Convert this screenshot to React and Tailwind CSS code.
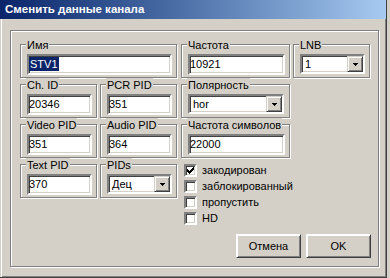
import React from "react";

const sunken =
  "border-2 border-t-[#808080] border-l-[#808080] border-b-white border-r-white shadow-[inset_1px_1px_0_#404040,inset_-1px_-1px_0_#d4d0c8] bg-white";
const raised =
  "border border-t-[#d4d0c8] border-l-[#d4d0c8] border-b-[#404040] border-r-[#404040] shadow-[inset_1px_1px_0_#fff,inset_-1px_-1px_0_#808080] bg-[#d4d0c8]";

function Group({ label, w, children }) {
  return (
    <div
      className={`relative h-[34px] shrink-0 border border-[#808080] shadow-[inset_1px_1px_0_#fff,1px_1px_0_#fff] ${w}`}
    >
      <span className="absolute left-[5px] top-[-7px] bg-[#d4d0c8] px-[1px] leading-[14px] whitespace-nowrap">
        {label}
      </span>
      <div className="pl-[6px] pt-[9px]">{children}</div>
    </div>
  );
}

function Field({ value, w, selected }) {
  return (
    <div className={`${sunken} ${w} h-[21px] leading-[17px]`}>
      {selected ? (
        <span className="inline-block bg-[#0a246a] px-[1px] leading-[14px] text-white">{value}</span>
      ) : (
        value
      )}
    </div>
  );
}

function Arrow() {
  return (
    <svg width="5" height="3" viewBox="0 0 5 3" className="block">
      <path d="M0 0h5v1h-1v1h-1v1h-1v-1h-1v-1h-1z" fill="#000" />
    </svg>
  );
}

function Combo({ value, w }) {
  return (
    <div className={`${sunken} ${w} flex h-[20px]`}>
      <div className="flex-1 pl-[3px] leading-[16px]">{value}</div>
      <div className={`${raised} flex h-[16px] w-[16px] items-center justify-center`}>
        <Arrow />
      </div>
    </div>
  );
}

function Check({ label, checked }) {
  return (
    <div className="flex h-[16px] w-[112px] items-start whitespace-nowrap">
      <div className={`${sunken} h-[13px] w-[13px] shrink-0`}>
        {checked && (
          <svg width="9" height="9" viewBox="0 0 9 9" className="block">
            <path
              d="M7 1h1v1h-1zM6 2h2v1h-2zM1 3h1v1h-1zM5 3h3v1h-3zM1 4h2v1h-2zM4 4h3v1h-3zM1 5h5v1h-5zM2 6h3v1h-3zM3 7h1v1h-1z"
              fill="#000"
            />
          </svg>
        )}
      </div>
      <span className="ml-[5px] leading-[13px]">{label}</span>
    </div>
  );
}

function Button({ children }) {
  return (
    <div
      className={`${raised} flex h-[24px] w-[65px] items-center justify-center border-t-white border-l-white shadow-[inset_-1px_-1px_0_#808080]`}
    >
      {children}
    </div>
  );
}

export default function App() {
  return (
    <div className="h-[278px] w-[390px] overflow-hidden bg-[#d4d0c8] text-[11px] text-black font-['Liberation_Sans',Arial,sans-serif]">
      <div className="h-[278px] w-[387px] border-b border-r border-b-[#404040] border-r-[#404040] shadow-[inset_1px_0_0_#d4d0c8,inset_2px_0_0_#fff,inset_-1px_-1px_0_#808080]">
        {/* title bar */}
        <div className="h-[19px] bg-gradient-to-r from-[#0a246a] to-[#a6caf0] pl-[5px] pt-[2px] text-[11.5px] font-bold leading-[15px] text-white">
          Сменить данные канала
        </div>

        {/* frame */}
        <div className="ml-[10px] mt-[11px] h-[237px] w-[369px] border border-[#808080] pl-[9px] pr-[7px] pt-[13px] shadow-[inset_1px_1px_0_#fff,1px_1px_0_#fff]">
          <div className="flex">
            <Group label="Имя" w="w-[157px]">
              <Field value="STV1" w="w-[145px]" selected />
            </Group>
            <div className="ml-[4px]">
              <Group label="Частота" w="w-[109px]">
                <Field value="10921" w="w-[97px]" />
              </Group>
            </div>
            <div className="ml-[3px]">
              <Group label="LNB" w="w-[77px]">
                <Combo value="1" w="w-[65px]" />
              </Group>
            </div>
          </div>

          <div className="mt-[6px] flex">
            <Group label="Ch. ID" w="w-[77px]">
              <Field value="20346" w="w-[65px]" />
            </Group>
            <div className="ml-[3px]">
              <Group label="PCR PID" w="w-[77px]">
                <Field value="351" w="w-[65px]" />
              </Group>
            </div>
            <div className="ml-[4px]">
              <Group label="Полярность" w="w-[109px]">
                <Combo value="hor" w="w-[96px]" />
              </Group>
            </div>
          </div>

          <div className="mt-[6px] flex">
            <Group label="Video PID" w="w-[77px]">
              <Field value="351" w="w-[65px]" />
            </Group>
            <div className="ml-[3px]">
              <Group label="Audio PID" w="w-[77px]">
                <Field value="364" w="w-[65px]" />
              </Group>
            </div>
            <div className="ml-[4px]">
              <Group label="Частота символов" w="w-[109px]">
                <Field value="22000" w="w-[97px]" />
              </Group>
            </div>
          </div>

          <div className="mt-[6px] flex items-start">
            <Group label="Text PID" w="w-[77px]">
              <Field value="370" w="w-[65px]" />
            </Group>
            <div className="ml-[3px]">
              <Group label="PIDs" w="w-[77px]">
                <Combo value="Дец" w="w-[65px]" />
              </Group>
            </div>
            <div className="ml-[7px] flex flex-col">
              <Check label="закодирован" checked />
              <Check label="заблокированный" />
              <Check label="пропустить" />
              <Check label="HD" />
            </div>
          </div>

          <div className="mt-[6px] flex justify-end gap-[5px]">
            <Button>Отмена</Button>
            <Button>OK</Button>
          </div>
        </div>
      </div>
    </div>
  );
}
